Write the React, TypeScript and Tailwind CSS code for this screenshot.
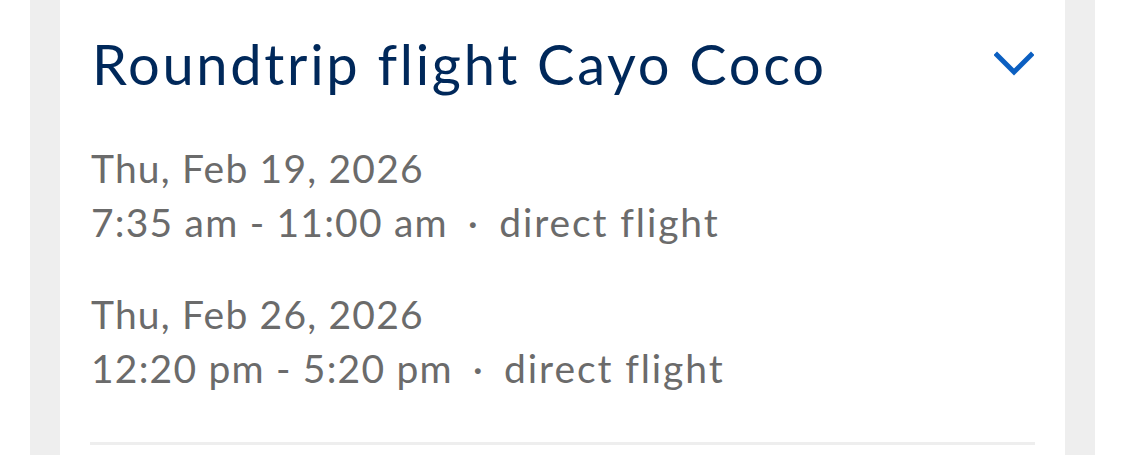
import React from "react";

const flights = [
  { date: "Thu, Feb 19, 2026", time: "7:35 am - 11:00 am", kind: "direct flight" },
  { date: "Thu, Feb 26, 2026", time: "12:20 pm - 5:20 pm", kind: "direct flight" },
];

function Chevron() {
  return (
    <svg width="40" height="26" viewBox="0 0 40 26" fill="none">
      <polyline
        points="3,5 20,22 37,5"
        stroke="#0b5fc1"
        strokeWidth="5"
        strokeLinecap="square"
        strokeLinejoin="miter"
      />
    </svg>
  );
}

export default function App() {
  return (
    <div
      className="w-[1125px] h-[455px] bg-white px-[30px] overflow-hidden"
      style={{ fontFamily: "Lato, 'Open Sans', sans-serif" }}
    >
      {/* grey frame */}
      <div className="h-full bg-[#eeeeee] px-[30px]">
        {/* card */}
        <div className="h-full bg-white px-[30px] pt-[30px]">
          <div className="flex items-start justify-between">
            <h2 className="text-[56px] leading-[1.2] tracking-[2.7px] text-[#00285a] pl-[2px]">
              Roundtrip flight Cayo Coco
            </h2>
            <div className="pt-[20px] pr-[1px]">
              <Chevron />
            </div>
          </div>

          <div className="mt-[44px] flex flex-col gap-[38px] text-[39px] leading-[54px] tracking-[1.2px] text-[#6b6b6b] pl-[1px]">
            {flights.map((f) => (
              <div key={f.date}>
                <div>{f.date}</div>
                <div className="flex items-center">
                  <span>{f.time}</span>
                  <span className="mx-[20px]">·</span>
                  <span className="tracking-[1.9px]">{f.kind}</span>
                </div>
              </div>
            ))}
          </div>

          <div className="mt-[47px] h-[3px] bg-[#eeeeee]" />
        </div>
      </div>
    </div>
  );
}
